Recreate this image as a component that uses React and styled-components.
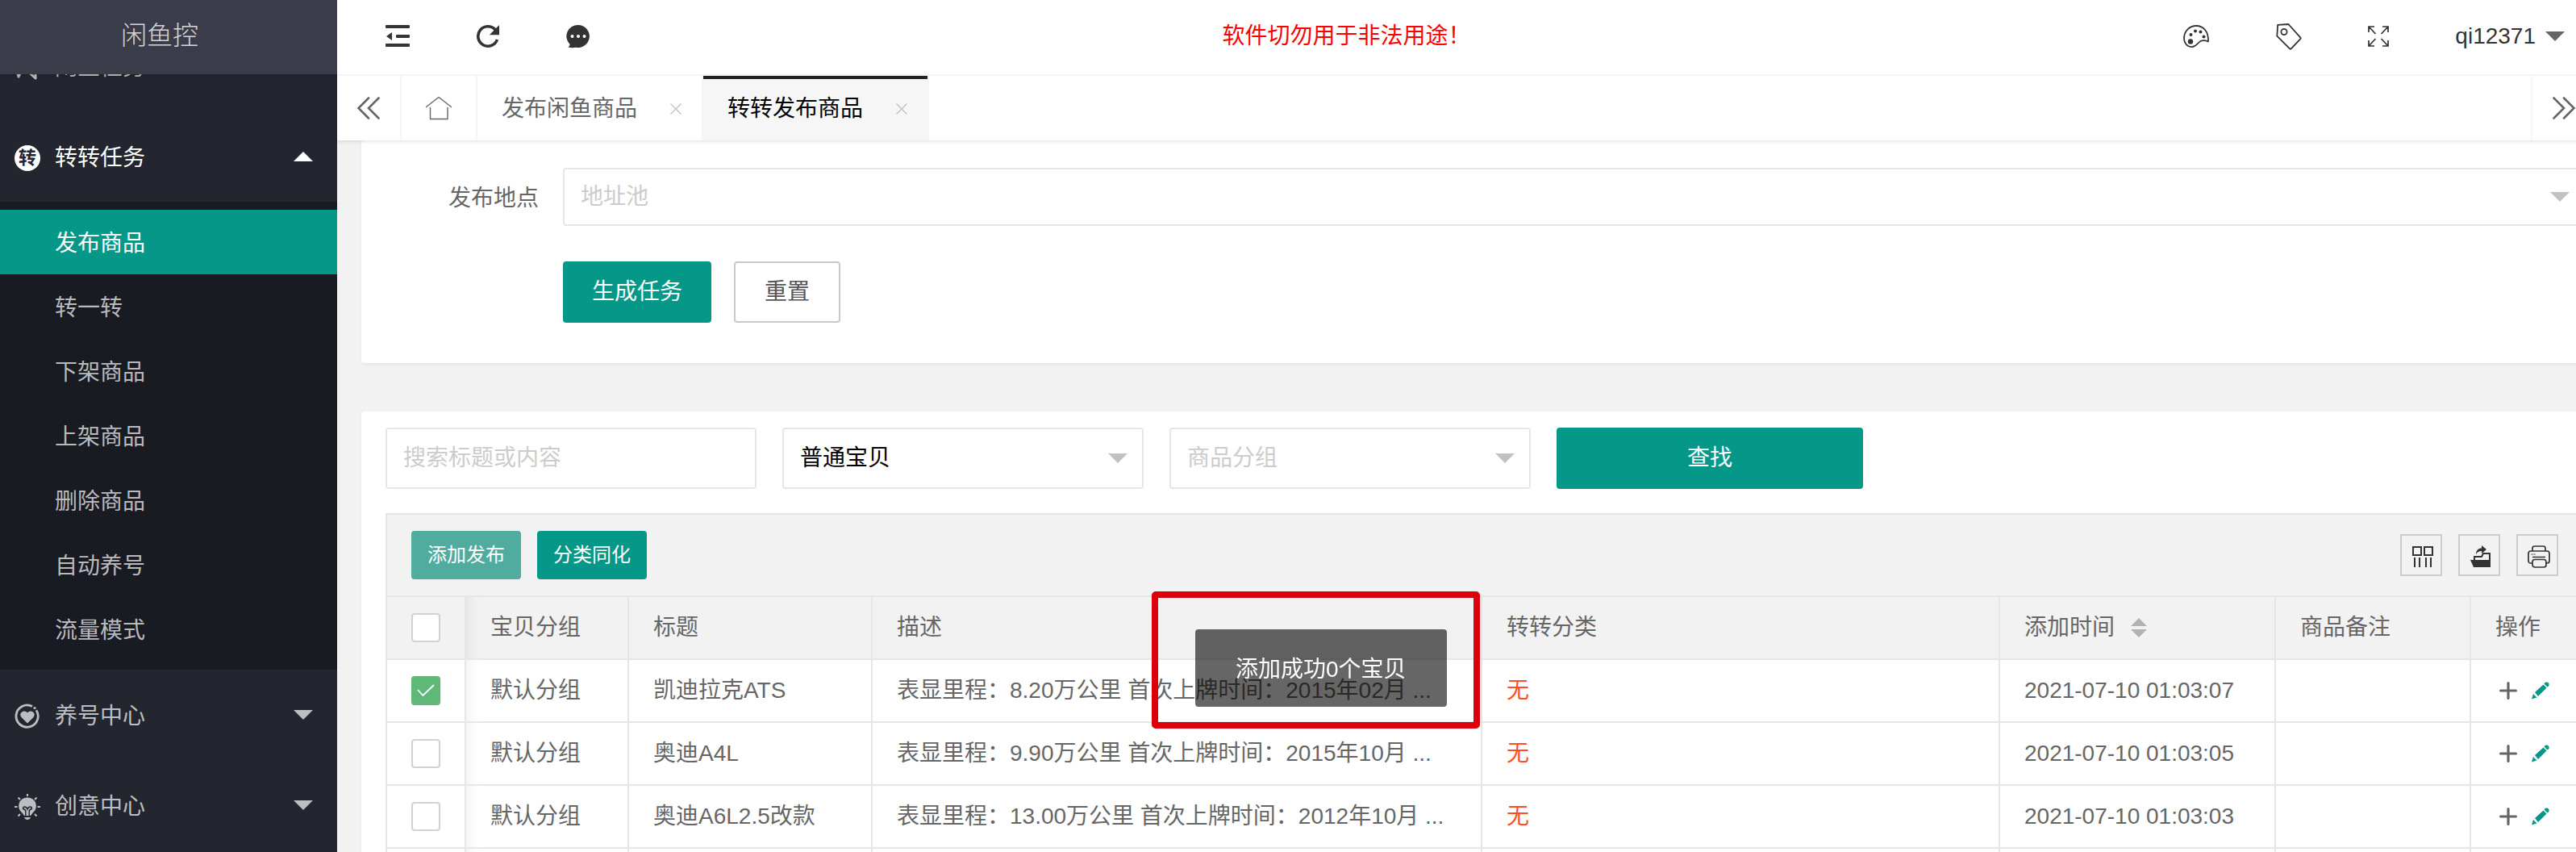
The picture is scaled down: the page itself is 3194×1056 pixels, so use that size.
import React, { useState } from "react";
import styled, { createGlobalStyle, css } from "styled-components";

const Global = createGlobalStyle`
  *, *::before, *::after { box-sizing: border-box; }
  body {
    margin: 0;
    overflow: hidden;
    background: #f2f2f2;
    color: #666;
    font: 28px/40px "Liberation Sans", "Noto Sans CJK SC", sans-serif;
  }
  button, input, select { font: inherit; color: inherit; margin: 0; }
  button { cursor: pointer; }
  a { color: inherit; text-decoration: none; }
  svg { display: block; flex: none; }
`;

const Shell = styled.div`
  display: flex;
  height: 100vh;
  overflow: hidden;
`;

/* ---------- side menu ---------- */

const Side = styled.aside`
  flex: none;
  display: flex;
  flex-direction: column;
  width: 418px;
  background: #23262f;
  overflow: hidden;
`;

const Brand = styled.h1`
  flex: none;
  margin: 0;
  padding-right: 22px;
  height: 92px;
  background: #3b3c4a;
  color: rgba(255, 255, 255, 0.8);
  font-size: 32px;
  font-weight: 300;
  line-height: 88px;
  text-align: center;
  box-shadow: 0 2px 4px rgba(0, 0, 0, 0.15);
  z-index: 1;
`;

const Menu = styled.nav`
  margin-top: -66px;
`;

const Group = styled.button`
  display: flex;
  align-items: center;
  width: 100%;
  height: 112px;
  padding: 0 30px 0 18px;
  border: 0;
  background: none;
  color: ${(p) => (p.$open ? "#fff" : "#bdbec1")};
  text-align: left;
`;

const GroupIcon = styled.span`
  flex: none;
  width: 32px;
  margin-right: 18px;
  padding-top: 4px;
`;

const GroupName = styled.span`
  flex: 1;
  padding-top: 4px;
`;

const RoundMark = styled.span`
  display: flex;
  align-items: center;
  justify-content: center;
  width: 32px;
  height: 32px;
  border-radius: 50%;
  background: #fff;
  color: #23262f;
  font-size: 22px;
  font-weight: 700;
  line-height: 32px;
`;

const Children = styled.ul`
  margin: 0;
  padding: 10px 0;
  list-style: none;
  background: #191b23;
`;

const Child = styled.a`
  display: block;
  padding: 4px 0 0 68px;
  line-height: 76px;
  color: ${(p) => (p.$active ? "#fff" : "#bababd")};
  background: ${(p) => (p.$active ? "#059788" : "transparent")};
`;

const Caret = styled.i`
  flex: none;
  width: 0;
  height: 0;
  border: 12px solid transparent;
  ${(p) =>
    p.$up
      ? css`border-top-width: 0; border-bottom-color: currentColor;`
      : css`border-bottom-width: 0; border-top-color: currentColor;`}
`;

/* ---------- top bar ---------- */

const Main = styled.main`
  flex: 1;
  min-width: 0;
  display: flex;
  flex-direction: column;
  margin-right: -24px;
`;

const TopBar = styled.header`
  flex: none;
  display: grid;
  grid-template-columns: 13fr auto 17fr;
  align-items: center;
  height: 94px;
  padding: 0 38px 2px 60px;
  border-bottom: 2px solid #f6f6f6;
  background: #fff;
  color: #333;
`;

const Tools = styled.div`
  display: flex;
  align-items: center;
  gap: 82px;
  ${(p) => p.$end && css`justify-content: flex-end;`}
`;

const IconButton = styled.button`
  padding: 0;
  border: 0;
  background: none;
`;

const Notice = styled.strong`
  color: #f00;
  font-weight: 400;
`;

const User = styled.button`
  display: flex;
  align-items: center;
  gap: 12px;
  padding: 0;
  border: 0;
  background: none;
  ${Caret} { color: #666; }
`;

/* ---------- page tabs ---------- */

const TabBar = styled.div`
  flex: none;
  display: flex;
  height: 80px;
  background: #fff;
  box-shadow: 0 2px 4px rgba(0, 0, 0, 0.1);
  z-index: 1;
`;

const TabControl = styled.button`
  flex: none;
  display: flex;
  align-items: center;
  justify-content: center;
  width: ${(p) => (p.$wide ? 94 : 80)}px;
  padding: 0;
  border: solid #f6f6f6;
  border-width: ${(p) => (p.$end ? "0 0 0 2px" : "0 2px 0 0")};
  background: none;
`;

const Tabs = styled.div`
  flex: 1;
  display: flex;
`;

const Tab = styled.div`
  display: flex;
  align-items: center;
  gap: 40px;
  padding: 2px 24px 0 30px;
  border-right: 2px solid #f6f6f6;
  ${(p) =>
    p.$active &&
    css`
      background: #f6f6f6;
      color: #000;
      box-shadow: inset 0 4px 0 #20222a;
    `}
`;

/* ---------- content ---------- */

const Content = styled.div`
  flex: 1;
  min-height: 0;
  display: flex;
  flex-direction: column;
  gap: 60px;
  padding-left: 30px;
  overflow: hidden;
`;

const Card = styled.section`
  flex: none;
  background: #fff;
  border-radius: 4px;
  box-shadow: 0 2px 4px rgba(0, 0, 0, 0.05);
`;

const PublishForm = styled.form`
  display: grid;
  grid-template-columns: 220px 1fr;
  column-gap: 30px;
  row-gap: 44px;
  padding: 34px 12px 50px 0;
`;

const FieldLabel = styled.label`
  height: 72px;
  line-height: 76px;
  text-align: right;
`;

const Actions = styled.div`
  grid-column: 2;
  display: flex;
  gap: 28px;
`;

const Button = styled.button`
  height: ${(p) => (p.$small ? 60 : 76)}px;
  width: ${(p) => (p.$wide ? "380px" : "auto")};
  padding: 0 ${(p) => (p.$small ? 20 : 36)}px;
  border: ${(p) => (p.$plain ? "2px solid #c9c9c9" : "0")};
  border-radius: 4px;
  background: ${(p) => (p.$plain ? "#fff" : p.$faded ? "#50ac9f" : "#059788")};
  color: ${(p) => (p.$plain ? "#555" : "#fff")};
  font-size: ${(p) => (p.$small ? 24 : 28)}px;
`;

const SelectBox = styled.div`
  display: flex;
  align-items: center;
  position: relative;
  width: ${(p) => (p.$wide ? "auto" : "448px")};
  height: ${(p) => (p.$wide ? 72 : 76)}px;
  ${Caret} {
    position: absolute;
    right: 20px;
    color: #c2c2c2;
    pointer-events: none;
  }
`;

const fieldLook = css`
  height: 100%;
  padding: 0 20px;
  border: 2px solid #e6e6e6;
  border-radius: 4px;
  background: #fff;
  outline: 0;
`;

const Select = styled.select`
  ${fieldLook}
  width: 100%;
  appearance: none;
  color: ${(p) => (p.$empty ? "#ccc" : "#000")};
`;

const Search = styled.input`
  ${fieldLook}
  width: 460px;
  height: 76px;
  &::placeholder { color: #ccc; opacity: 1; }
`;

const Filters = styled.form`
  display: flex;
  gap: 32px;
  padding: 20px 30px 30px;
`;

const Grid = styled.div`
  margin-left: 30px;
  border: solid #e6e6e6;
  border-width: 2px 0 0 2px;
`;

const GridTools = styled.div`
  display: flex;
  align-items: center;
  gap: 20px;
  height: 100px;
  padding: 0 46px 0 30px;
  background: #f2f2f2;
`;

const Spacer = styled.span`
  flex: 1;
`;

const SquareButton = styled.button`
  display: flex;
  align-items: center;
  justify-content: center;
  width: 52px;
  height: 52px;
  padding: 4px 0 0 4px;
  border: 2px solid #ccc;
  background: none;
  color: #333;
`;

const Table = styled.table`
  width: 100%;
  table-layout: fixed;
  border-collapse: separate;
  border-spacing: 0;
`;

const cellLook = css`
  height: 78px;
  padding: 0 28px 0 30px;
  border: solid #e6e6e6;
  border-width: 0 2px 2px 0;
  font-weight: 400;
  text-align: left;
  white-space: nowrap;
`;

const Head = styled.th`
  ${cellLook}
  height: 80px;
  border-top-width: 2px;
  background: #f2f2f2;
`;

const Cell = styled.td`
  ${cellLook}
  color: ${(p) => (p.$alert ? "#ff4e26" : "inherit")};
`;

const edgeShadow = css`
  background-image: linear-gradient(to right, rgba(0, 0, 0, 0.04), transparent 16px);
`;

const EdgeHead = styled(Head)`${edgeShadow}`;
const EdgeCell = styled(Cell)`${edgeShadow}`;

const Tick = styled.input`
  appearance: none;
  display: block;
  width: 36px;
  height: 36px;
  margin: 0;
  border: 2px solid #d2d2d2;
  border-radius: 4px;
  background: #fff;
  &:checked {
    border-color: #5fb878;
    background: #5fb878;
  }
`;

const TickBox = styled.label`
  display: grid;
  width: 36px;
  height: 36px;
  > * { grid-area: 1 / 1; }
  svg { place-self: center; pointer-events: none; }
`;

const HeadLine = styled.span`
  display: flex;
  align-items: center;
  gap: 20px;
`;

const RowTools = styled.span`
  display: flex;
  align-items: center;
  gap: 18px;
  padding-left: 5px;
`;

/* ---------- message ---------- */

const Frame = styled.div`
  position: fixed;
  left: 1428px;
  top: 733px;
  padding: 39px 33px 19px 46px;
  border: 8px solid #dc000c;
  border-radius: 5px;
  pointer-events: none;
`;

const Toast = styled.div`
  padding: 30px 50px 26px;
  border-radius: 4px;
  background: rgba(0, 0, 0, 0.6);
  color: #fff;
  white-space: nowrap;
`;

/* ---------- drawings ---------- */

const FoldIcon = () => (
  <svg width="30" height="28" viewBox="0 0 30 28" fill="currentColor">
    <rect width="30" height="4" rx="1" />
    <rect x="13" y="12" width="17" height="4" rx="1" />
    <rect y="23" width="30" height="4" rx="1" />
    <path d="M1 14 8 9v10z" />
  </svg>
);

const ReloadIcon = () => (
  <svg width="30" height="30" viewBox="0 0 30 30" fill="none" stroke="currentColor" strokeWidth="3.6">
    <path d="M24 6.800A12.200 12.200 0 1 0 26.500 19" />
    <path d="M29 1v12.200H16.800z" fill="currentColor" stroke="none" />
  </svg>
);

const ChatIcon = () => (
  <svg width="30" height="30" viewBox="0 0 30 30">
    <path d="M15 1a14 14 0 1 1-3 27.700c-3 .6-6 .7-9.600-.3 1.700-1 2.300-2 2-3.600A14 14 0 0 1 15 1z" fill="currentColor" />
    <circle cx="7.500" cy="15" r="2" fill="#fff" />
    <circle cx="15" cy="15" r="2" fill="#fff" />
    <circle cx="22.500" cy="15" r="2" fill="#fff" />
  </svg>
);

const PaletteIcon = () => (
  <svg width="34" height="30" viewBox="0 0 34 30" fill="none" stroke="currentColor" strokeWidth="1.800">
    <path d="M32 21.500c-3-1.200-6.500-2-9.500-.5-3.500 1.800-5 6.500-10 7C5.500 28.500 2 23 2 17.500 2 8.500 9 2 17 2c9.500 0 15.600 7.500 15 19.500z" strokeLinejoin="round" />
    <g fill="currentColor" stroke="none">
      <circle cx="10" cy="21.500" r="3.200" />
      <circle cx="10.500" cy="13" r="2" />
      <circle cx="16" cy="8.500" r="2" />
      <circle cx="22.500" cy="9.500" r="2" />
      <circle cx="26.500" cy="15.500" r="2" />
    </g>
  </svg>
);

const TagIcon = () => (
  <svg width="32" height="34" viewBox="0 0 32 34" fill="none" stroke="currentColor" strokeWidth="1.800" strokeLinejoin="round">
    <path d="M2.200 2.800 15.500 2 30.400 18.600c.5.500.5 1 0 1.500L18.800 32.400c-.6.600-1.100.6-1.700 0L1.300 16.600z" />
    <circle cx="10" cy="11.500" r="3.600" />
  </svg>
);

const ExpandIcon = () => (
  <svg width="26" height="26" viewBox="0 0 26 26" fill="none" stroke="currentColor" strokeWidth="1.700">
    <path d="M1 8V1h7M1.500 1.500l8 8.500M18 1h7v7M24.500 1.500l-8 8.500M1 18v7h7M1.500 24.500l8-8.500M18 25h7v-7M24.500 24.500l-8-8.500" />
  </svg>
);

const DoubleArrow = ({ right }) => (
  <svg width="30" height="28" viewBox="0 0 30 28" fill="none" stroke="#666" strokeWidth="2.600" strokeLinecap="round">
    <path d={right ? "M2.500 1.500 15 14 2.500 26.500M15 1.500 27.500 14 15 26.500" : "M15 1.500 2.500 14 15 26.500M27.500 1.500 15 14l12.500 12.500"} />
  </svg>
);

const HomeIcon = () => (
  <svg width="34" height="30" viewBox="0 0 34 30" fill="none" stroke="#666" strokeWidth="1.400" strokeLinecap="round" strokeLinejoin="round">
    <path d="M1.500 13.500 17 1.500 32.500 13.500M6.500 14.500v14h21.500v-14" />
  </svg>
);

const CrossIcon = () => (
  <svg width="16" height="16" viewBox="0 0 16 16" fill="none" stroke="#c2c2c2" strokeWidth="1.400">
    <path d="m1.500 1.500 13 13m0-13-13 13" />
  </svg>
);

const FishIcon = () => (
  <svg width="32" height="32" viewBox="0 0 32 32" fill="none" stroke="currentColor" strokeWidth="3" strokeLinejoin="round">
    <path d="M3 20 5 27l2-4C12 12 17 6 28 4c0 10-4 14-12 16l10 9v-8" />
  </svg>
);

const HeartIcon = () => (
  <svg width="32" height="32" viewBox="0 0 32 32" fill="none" stroke="currentColor" strokeWidth="2.800">
    <path d="M22 3.600A13.600 13.600 0 1 0 27 8.200" />
    <path d="M16 24.500 8.500 17c-4-5 3-10.500 7.500-5.500 4.500-5 11.500.5 7.500 5.500z" fill="currentColor" stroke="none" />
    <circle cx="25" cy="5.500" r="1.600" fill="currentColor" stroke="none" />
  </svg>
);

const BulbIcon = () => (
  <svg width="32" height="32" viewBox="0 0 32 32" fill="currentColor">
    <path d="M16 4.500A10.500 10.500 0 0 0 9.500 23.500L12 27h8l2.500-3.500A10.500 10.500 0 0 0 16 4.500z" />
    <path d="M12 29h8q-1 3-4 3t-4-3z" />
    <path d="M13.800 27.500V22q0-3-3.300-3.500 0-2.500 2-2.500 2.500 0 3.500 3 1-3 3.500-3 2 0 2 2.500-3.300.5-3.300 3.500v5.500" fill="none" stroke="#23262f" strokeWidth="1.400" />
    <path d="M16 0v3M4.500 4.500l2.500 2.500M27.500 4.500 25 7M0 16h3.500M28.500 16H32M4.500 27.500 7 25M27.500 27.500 25 25" stroke="currentColor" strokeWidth="2" />
  </svg>
);

const ColumnsIcon = () => (
  <svg width="28" height="28" viewBox="0 0 28 28" fill="none" stroke="currentColor" strokeWidth="2">
    <path d="M2 2h10v10H2zM16 2h10v10H16zM4 15v12M10 15v12M18 15v12M24 15v12" />
  </svg>
);

const ExportIcon = () => (
  <svg width="28" height="28" viewBox="0 0 28 28">
    <path d="M1 18h20l4 9H5z M8 11c0-5 3-7.500 7-7.500V0l6 5-6 5V7c-3.500 0-5 1-7 4z" fill="currentColor" />
    <path d="M6 18v-4h9l2-4h8v17" fill="none" stroke="currentColor" strokeWidth="2" />
    <path d="M20 18h6v9H6z" fill="currentColor" />
  </svg>
);

const PrintIcon = () => (
  <svg width="28" height="28" viewBox="0 0 28 28" fill="none" stroke="currentColor" strokeWidth="1.700">
    <path d="M6 7V3.500Q6 1 8.500 1h11Q22 1 22 3.500V7M6 22H4q-3 0-3-3v-9q0-3 3-3h20q3 0 3 3v9q0 3-3 3h-2M6 14.500h16" />
    <rect x="6" y="17.500" width="17" height="9.500" rx="3" />
    <path d="M4.500 11h5" strokeDasharray="2 1" strokeWidth="1.200" />
  </svg>
);

const PlusIcon = () => (
  <svg width="22" height="22" viewBox="0 0 22 22" stroke="#666" strokeWidth="3.200" strokeLinecap="round">
    <path d="M11 1.600v18.800M1.600 11h18.800" />
  </svg>
);

const PencilIcon = () => (
  <svg width="22" height="22" viewBox="0 0 22 22" fill="#059788">
    <path d="M0 21.500 2 15l4.500 4.500zM4 13 14.500 3.500l4 4L8 18zM15.500 2.500C17-.5 22 0 21.500 4c0 1-1 2-2 2.500z" />
  </svg>
);

const CheckMark = () => (
  <svg width="22" height="16" viewBox="0 0 22 16" fill="none" stroke="#fff" strokeWidth="1.800">
    <path d="m1 7 6.500 7L21 1" />
  </svg>
);

const SortIcon = () => (
  <svg width="20" height="24" viewBox="0 0 20 24" fill="#b2b2b2">
    <path d="M10 0 20 10H0zM0 14h20L10 24z" />
  </svg>
);

/* ---------- data ---------- */

const children = ["发布商品", "转一转", "下架商品", "上架商品", "删除商品", "自动养号", "流量模式"];

const rows = [
  { title: "凯迪拉克ATS", text: "表显里程：8.20万公里 首次上牌时间：2015年02月 ...", time: "2021-07-10 01:03:07" },
  { title: "奥迪A4L", text: "表显里程：9.90万公里 首次上牌时间：2015年10月 ...", time: "2021-07-10 01:03:05" },
  { title: "奥迪A6L2.5改款", text: "表显里程：13.00万公里 首次上牌时间：2012年10月 ...", time: "2021-07-10 01:03:03" },
];

function MenuGroup({ icon, name, open, onClick, items }) {
  return (
    <>
      <Group type="button" $open={open} aria-expanded={!!open} onClick={onClick}>
        <GroupIcon>{icon}</GroupIcon>
        <GroupName>{name}</GroupName>
        <Caret $up={open} />
      </Group>
      {open && (
        <Children>
          {items.map((item, i) => (
            <li key={item}>
              <Child href="#" $active={i === 0}>{item}</Child>
            </li>
          ))}
        </Children>
      )}
    </>
  );
}

function Check({ label, checked, onChange }) {
  return (
    <TickBox>
      <Tick type="checkbox" aria-label={label} checked={checked} onChange={onChange} />
      {checked && <CheckMark />}
    </TickBox>
  );
}

export default function App() {
  const [open, setOpen] = useState(true);
  const [picked, setPicked] = useState([true, false, false]);
  const all = picked.every(Boolean);
  const stop = (e) => e.preventDefault();

  return (
    <>
      <Global />
      <Shell>
        <Side>
          <Brand>闲鱼控</Brand>
          <Menu>
            <MenuGroup icon={<FishIcon />} name="闲鱼任务" />
            <MenuGroup
              icon={<RoundMark aria-hidden="true">转</RoundMark>}
              name="转转任务"
              open={open}
              onClick={() => setOpen(!open)}
              items={children}
            />
            <MenuGroup icon={<HeartIcon />} name="养号中心" />
            <MenuGroup icon={<BulbIcon />} name="创意中心" />
          </Menu>
        </Side>

        <Main>
          <TopBar>
            <Tools>
              <IconButton aria-label="侧边伸缩"><FoldIcon /></IconButton>
              <IconButton aria-label="刷新"><ReloadIcon /></IconButton>
              <IconButton aria-label="消息"><ChatIcon /></IconButton>
            </Tools>
            <Notice>软件切勿用于非法用途！</Notice>
            <Tools $end>
              <IconButton aria-label="主题"><PaletteIcon /></IconButton>
              <IconButton aria-label="便签"><TagIcon /></IconButton>
              <IconButton aria-label="全屏"><ExpandIcon /></IconButton>
              <User>qi12371<Caret /></User>
            </Tools>
          </TopBar>

          <TabBar>
            <TabControl aria-label="向左"><DoubleArrow /></TabControl>
            <TabControl $wide aria-label="首页"><HomeIcon /></TabControl>
            <Tabs>
              <Tab>发布闲鱼商品<IconButton aria-label="关闭"><CrossIcon /></IconButton></Tab>
              <Tab $active>转转发布商品<IconButton aria-label="关闭"><CrossIcon /></IconButton></Tab>
            </Tabs>
            <TabControl $end aria-label="向右"><DoubleArrow right /></TabControl>
          </TabBar>

          <Content>
            <Card>
              <PublishForm onSubmit={stop}>
                <FieldLabel htmlFor="place">发布地点</FieldLabel>
                <SelectBox $wide>
                  <Select id="place" $empty defaultValue="">
                    <option value="">地址池</option>
                  </Select>
                  <Caret />
                </SelectBox>
                <Actions>
                  <Button type="submit">生成任务</Button>
                  <Button type="reset" $plain>重置</Button>
                </Actions>
              </PublishForm>
            </Card>

            <Card>
              <Filters onSubmit={stop}>
                <Search type="text" aria-label="搜索" placeholder="搜索标题或内容" />
                <SelectBox>
                  <Select aria-label="宝贝类型" defaultValue="普通宝贝">
                    <option>普通宝贝</option>
                  </Select>
                  <Caret />
                </SelectBox>
                <SelectBox>
                  <Select aria-label="分组" $empty defaultValue="">
                    <option value="">商品分组</option>
                  </Select>
                  <Caret />
                </SelectBox>
                <Button type="submit" $wide>查找</Button>
              </Filters>

              <Grid>
                <GridTools>
                  <Button type="button" $small $faded>添加发布</Button>
                  <Button type="button" $small>分类同化</Button>
                  <Spacer />
                  <SquareButton aria-label="筛选列"><ColumnsIcon /></SquareButton>
                  <SquareButton aria-label="导出"><ExportIcon /></SquareButton>
                  <SquareButton aria-label="打印"><PrintIcon /></SquareButton>
                </GridTools>
                <Table>
                  <colgroup>
                    <col width="98" />
                    <col width="202" />
                    <col width="302" />
                    <col width="756" />
                    <col />
                    <col width="342" />
                    <col width="242" />
                    <col width="154" />
                  </colgroup>
                  <thead>
                    <tr>
                      <Head><Check label="全选" checked={all} onChange={() => setPicked(picked.map(() => !all))} /></Head>
                      <EdgeHead>宝贝分组</EdgeHead>
                      <Head>标题</Head>
                      <Head>描述</Head>
                      <Head>转转分类</Head>
                      <Head><HeadLine>添加时间<SortIcon /></HeadLine></Head>
                      <Head>商品备注</Head>
                      <Head>操作</Head>
                    </tr>
                  </thead>
                  <tbody>
                    {rows.map((row, i) => (
                      <tr key={row.time}>
                        <Cell>
                          <Check
                            label={row.title}
                            checked={picked[i]}
                            onChange={() => setPicked(picked.map((v, n) => (n === i ? !v : v)))}
                          />
                        </Cell>
                        <EdgeCell>默认分组</EdgeCell>
                        <Cell>{row.title}</Cell>
                        <Cell>{row.text}</Cell>
                        <Cell $alert>无</Cell>
                        <Cell>{row.time}</Cell>
                        <Cell />
                        <Cell>
                          <RowTools>
                            <IconButton aria-label="添加"><PlusIcon /></IconButton>
                            <IconButton aria-label="编辑"><PencilIcon /></IconButton>
                          </RowTools>
                        </Cell>
                      </tr>
                    ))}
                    <tr>
                      <Cell /><EdgeCell /><Cell /><Cell /><Cell /><Cell /><Cell /><Cell />
                    </tr>
                  </tbody>
                </Table>
              </Grid>
            </Card>
          </Content>
        </Main>
      </Shell>

      <Frame>
        <Toast role="status">添加成功0个宝贝</Toast>
      </Frame>
    </>
  );
}
